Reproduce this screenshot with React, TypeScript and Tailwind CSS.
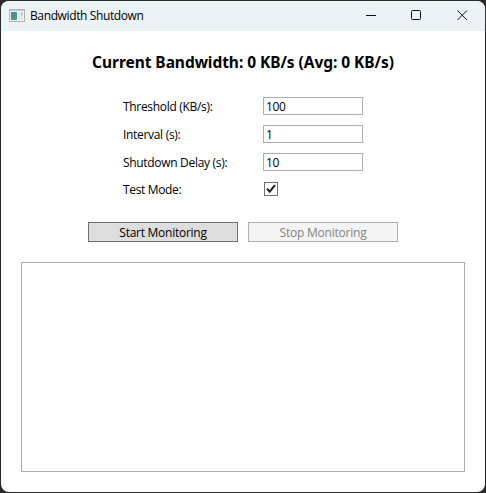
import React from "react";

function TitleBar() {
  return (
    <header className="flex h-[30px] shrink-0 items-center bg-[#ebf3f7] pl-2">
      <svg width="16" height="14" viewBox="0 0 16 14" className="-mt-px shrink-0">
        <defs>
          <linearGradient id="pane" x1="0" y1="0" x2="1" y2="1">
            <stop offset="0" stopColor="#4681a8" />
            <stop offset="1" stopColor="#4aa675" />
          </linearGradient>
        </defs>
        <rect x="0.5" y="0.5" width="15" height="12" fill="#f3f3f3" stroke="#b0b3b5" />
        <path d="M1 1.5h14" stroke="#c3c6c8" />
        <rect x="2" y="3" width="6" height="8" fill="url(#pane)" />
        <rect x="9" y="3" width="2.5" height="8" fill="#e3e3e8" />
        <rect x="12" y="3" width="2" height="4" fill="#b9d3cd" />
        <rect x="12" y="7" width="2" height="4" fill="#e5e5e5" />
      </svg>
      <span className="ml-[5px] w-[114px] whitespace-nowrap text-[12px] leading-4 tracking-[-0.38px]">
        Bandwidth Shutdown
      </span>
      <div className="ml-auto flex">
        <svg width="46" height="30" viewBox="0 0 46 30" fill="none" stroke="#111">
          <path d="M19 14.5h10" />
        </svg>
        <svg width="46" height="30" viewBox="0 0 46 30" fill="none" stroke="#111">
          <rect x="18.5" y="9.5" width="9" height="9" rx="1" />
        </svg>
        <svg width="46" height="30" viewBox="0 0 46 30" fill="none" stroke="#111">
          <path d="M18.5 9.5l9.5 9.5M28 9.5l-9.5 9.5" />
        </svg>
      </div>
    </header>
  );
}

function Field({ label, value }: { label: string; value: string }) {
  return (
    <div className="flex h-[18px] items-center">
      <span className="w-[140px] whitespace-nowrap pt-px leading-4 tracking-[-0.31px]">{label}</span>
      <div className="flex h-[18px] w-[100px] items-center border border-[#abadb3] bg-white pl-[2px] pt-px leading-4 tracking-[-0.3px]">
        {value}
      </div>
    </div>
  );
}

export default function App() {
  return (
    <div className="h-[493px] w-[486px] bg-[#2b2829] p-px font-['Open_Sans','Noto_Sans',sans-serif] text-[12px] text-black">
      <div className="flex h-[491px] w-[484px] flex-col overflow-hidden rounded-lg bg-white">
        <TitleBar />
        <main className="flex flex-col">
          <h1 className="mt-[21px] whitespace-nowrap text-center font-['Noto_Sans','Open_Sans',sans-serif] text-[15.5px] font-bold leading-5 tracking-[-0.05px]">
            Current Bandwidth: 0 KB/s (Avg: 0 KB/s)
          </h1>
          <div className="ml-[122px] mt-[25px] flex flex-col gap-2.5">
            <Field label="Threshold (KB/s):" value="100" />
            <Field label="Interval (s):" value="1" />
            <Field label="Shutdown Delay (s):" value="10" />
          </div>
          <div className="ml-[122px] mt-[10px] flex h-[16px] items-center">
            <span className="w-[141px] whitespace-nowrap pt-px leading-4 tracking-[-0.35px]">Test Mode:</span>
            <svg width="14" height="14" viewBox="0 0 14 14" fill="none">
              <rect x="0.5" y="0.5" width="13" height="13" fill="white" stroke="#707070" />
              <path d="M3 6.6L5.7 9.7L11 3.2" stroke="#212121" strokeWidth="2.1" />
            </svg>
          </div>
          <div className="mt-[25px] flex gap-2.5 pl-[87px]">
            <button className="h-5 w-[150px] whitespace-nowrap border border-[#707070] bg-[#dddddd] leading-[20px] tracking-[-0.26px]">
              Start Monitoring
            </button>
            <button disabled className="h-5 w-[150px] whitespace-nowrap border border-[#adb2b5] bg-[#f4f4f4] leading-[20px] tracking-[-0.22px] text-[#838383]">
              Stop Monitoring
            </button>
          </div>
          <div className="ml-5 mt-5 h-[210px] w-[444px] border border-[#abadb3]" />
        </main>
      </div>
    </div>
  );
}
